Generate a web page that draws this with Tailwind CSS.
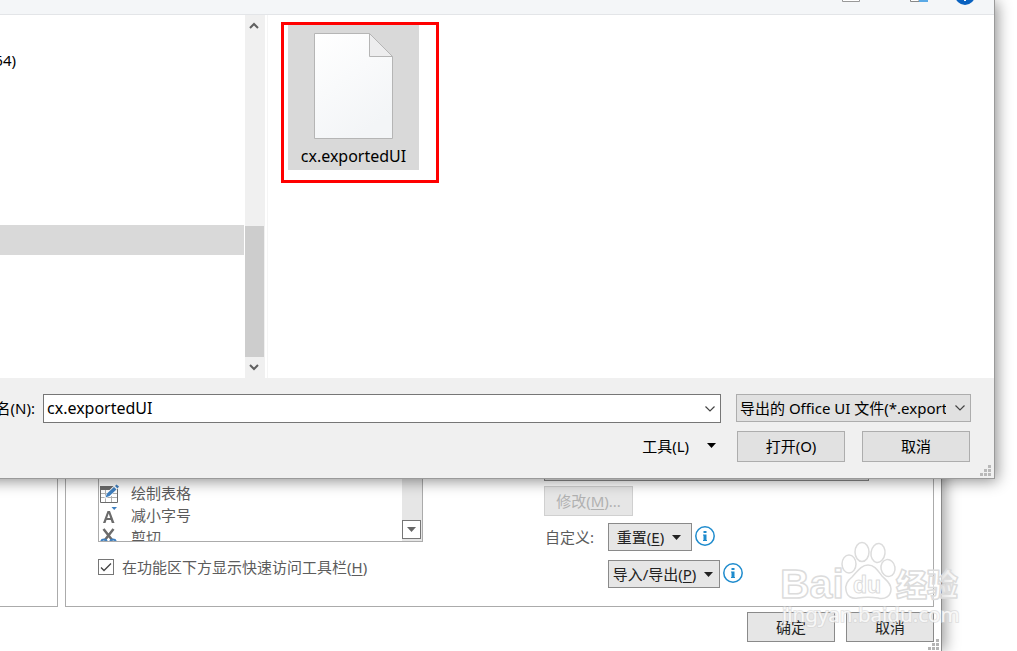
<!DOCTYPE html>
<html lang="zh-CN">
<head>
    <meta charset="UTF-8">
    <meta name="viewport" content="width=device-width, initial-scale=1.0">
    <title>导入自定义文件</title>
    <script src="https://cdn.jsdelivr.net/npm/@tailwindcss/browser@4"></script>
    <style>
        body { font-family: 'Noto Sans', 'Noto Sans CJK SC', sans-serif; }
    </style>
</head>
<body class="bg-white text-[15px] leading-5 text-black">

<div class="relative h-screen overflow-hidden">

    <!-- Options window (behind) -->
    <section class="absolute inset-y-0 left-0 right-[75px] flex flex-col bg-white border-r border-[#8a8a8a] shadow-[3px_0_14px_rgba(0,0,0,0.4)] pt-[440px] text-[#5c5c5c]">
        <div class="flex h-[167px] shrink-0 gap-[7px] pr-[7px]">
            <div class="w-[58px] border-r border-b border-[#ababab]"></div>
            <div class="flex-1 flex border border-[#ababab]">

                <div class="w-[325px] ml-8 shrink-0">
                    <div class="flex h-[101px] border border-t-0 border-[#ababab]">
                        <ul class="flex-1 h-[100px] overflow-hidden pt-[41px]">
                            <li class="flex h-[22px] items-center gap-3">
                                <svg class="w-5 h-5 shrink-0" viewBox="0 0 20 20" fill="none">
                                    <path d="M1.500 3.500H18.500V19.500H1.500Z" fill="#fff" stroke="#6b6b6b"/>
                                    <path d="M1 3H15L12 7H1Z" fill="#6b6b6b"/>
                                    <path d="M6.500 7V19M12.500 13V19M2 10.500H18M2 14.500H18" stroke="#b0b0b0"/>
                                    <path d="M7 14L9 10L17 2L19 4L11 12Z" fill="#fff" stroke="#fff" stroke-width="2"/>
                                    <path d="M6.500 14.500L8 10.500L15 4L17.500 6.500L10.500 13Z" fill="#3f7fbf"/>
                                    <path d="M16 3L17.500 1.500L20 3.500L18.500 5.500Z" fill="#3f7fbf"/>
                                </svg>
                                <span>绘制表格</span>
                            </li>
                            <li class="flex h-[22px] items-center gap-3">
                                <svg class="w-5 h-5 shrink-0" viewBox="0 0 20 20">
                                    <path d="M4 18L8.500 6H11L15.500 18H12.800L11.800 15H7.500L6.500 18ZM8.200 13H11.200L9.700 8.500Z" fill="#6b6b6b"/>
                                    <path d="M12.500 2H18L15.200 5Z" fill="#3f7fbf"/>
                                </svg>
                                <span>减小字号</span>
                            </li>
                            <li class="flex h-[22px] items-center gap-3">
                                <svg class="w-5 h-5 shrink-0" viewBox="0 0 20 20" fill="none">
                                    <path d="M4.500 2L13.500 13.500M14.500 2L5.500 13.500" stroke="#6b6b6b" stroke-width="2.500"/>
                                    <circle cx="5" cy="15.500" r="3" stroke="#3f7fbf" stroke-width="1.800"/>
                                    <circle cx="14" cy="15.500" r="3" stroke="#3f7fbf" stroke-width="1.800"/>
                                </svg>
                                <span>剪切</span>
                            </li>
                        </ul>
                        <div class="w-5 flex flex-col justify-end bg-[#e6e6e6] pb-[2px]">
                            <button aria-label="向下滚动" class="w-[19px] h-[19px] flex items-center justify-center bg-white border border-[#767676]">
                                <svg class="w-[9px] h-[5px]" viewBox="0 0 9 5"><path d="M0 0H9L4.500 5Z" fill="#666"/></svg>
                            </button>
                        </div>
                    </div>
                    <label class="flex items-center gap-2 mt-[15px]">
                        <span class="relative flex">
                            <input type="checkbox" checked class="appearance-none w-4 h-4 bg-white border border-[#767676]">
                            <svg class="absolute inset-0 w-4 h-4 pointer-events-none" viewBox="0 0 16 16" fill="none"><path d="M3 8.500L6 11.500L13 4.500" stroke="#444" stroke-width="1.300"/></svg>
                        </span>
                        <span>在功能区下方显示快速访问工具栏(<u class="underline-offset-2">H</u>)</span>
                    </label>
                </div>

                <div class="w-[325px] ml-[121px]">
                    <div class="h-10 bg-[#e6e6e6] border border-[#8a8a8a]"></div>
                    <button disabled class="mt-[5px] w-[89px] h-[30px] bg-[#e6e6e6] border border-[#d0d0d0] text-[#b1b1b1]">修改(<u class="underline-offset-2">M</u>)...</button>
                    <div class="grid grid-cols-[64px_1fr] items-center gap-y-[9px] mt-[7px]">
                        <span class="pl-px">自定义:</span>
                        <div class="flex items-center gap-[3px]">
                            <button class="w-[84px] h-7 flex items-center justify-center gap-2 bg-[#e6e6e6] border border-[#8a8a8a] pr-[2px] text-[#222]">
                                <span>重置(<u class="underline-offset-2">E</u>)</span>
                                <svg class="w-[9px] h-[5px]" viewBox="0 0 9 5"><path d="M0 0H9L4.500 5Z" fill="#222"/></svg>
                            </button>
                            <svg class="w-5 h-5 mb-[2px]" viewBox="0 0 20 20" fill="none"><circle cx="10" cy="10" r="9.200" stroke="#1e8bcd" stroke-width="1.500"/><path d="M8.500 5H11.500V7H8.500ZM8 8.500H11.500V14H12V15H8V14H8.500V9.500H8Z" fill="#1e8bcd"/></svg>
                        </div>
                        <div class="col-start-2 flex items-center gap-[3px]">
                            <button class="w-28 h-7 flex items-center justify-center gap-2 bg-[#e6e6e6] border border-[#8a8a8a] pr-[2px] text-[#222]">
                                <span>导入/导出(<u class="underline-offset-2">P</u>)</span>
                                <svg class="w-[9px] h-[5px]" viewBox="0 0 9 5"><path d="M0 0H9L4.500 5Z" fill="#222"/></svg>
                            </button>
                            <svg class="w-5 h-5 mb-[2px]" viewBox="0 0 20 20" fill="none"><circle cx="10" cy="10" r="9.200" stroke="#1e8bcd" stroke-width="1.500"/><path d="M8.500 5H11.500V7H8.500ZM8 8.500H11.500V14H12V15H8V14H8.500V9.500H8Z" fill="#1e8bcd"/></svg>
                        </div>
                    </div>
                </div>
            </div>
        </div>
        <div class="flex justify-end gap-[11px] pt-[5px] pr-[7px]">
            <button class="w-[88px] h-[30px] bg-[#e6e6e6] border border-[#8a8a8a] text-[#222]">确定</button>
            <button class="w-[88px] h-[30px] bg-[#e6e6e6] border border-[#8a8a8a] text-[#222]">取消</button>
        </div>
        <svg class="absolute right-[2px] bottom-px w-[11px] h-[11px]" viewBox="0 0 11 11" fill="#b4b4b4"><path d="M8 0h3v3h-3zM8 4h3v3h-3zM4 4h3v3h-3zM8 8h3v3h-3zM4 8h3v3h-3zM0 8h3v3h-3z"/></svg>
    </section>

    <!-- Open file dialog -->
    <section class="absolute top-0 -left-5 right-[22px] flex flex-col bg-[#f0f0f0] border-r border-b border-[#9a9a9a] pl-5 shadow-[2px_2px_14px_rgba(0,0,0,0.45)]">
        <div class="h-[15px] overflow-hidden flex justify-end gap-[41px] pr-[19px] bg-[#f4f6f8] border-b border-[#e3e5e8]">
            <svg class="w-[110px] h-[14px]" viewBox="0 0 110 14" fill="none">
                <path d="M18.500 0V1.500H35.500V0" fill="#fff" stroke="#999"/>
                <path d="M86.500 0V1.500H95V0" fill="#fff" stroke="#888"/>
                <path d="M95 0H104V2H95Z" fill="#5aa9e6"/>
            </svg>
            <svg class="w-5 h-[14px] -ml-[20px]" viewBox="0 0 20 14">
                <circle cx="10" cy="-5" r="10" fill="#0a62c0"/>
                <path d="M9 0H11V1H9Z" fill="#fff"/>
            </svg>
        </div>

        <div class="flex h-[363px] bg-white">
            <nav class="w-[245px] shrink-0 pt-[35px] pr-px overflow-hidden">
                <div class="flex h-5 w-4 justify-end whitespace-nowrap">64)</div>
                <div class="mt-[155px] h-[30px] bg-[#d9d9d9]"></div>
            </nav>
            <div class="w-5 shrink-0 flex flex-col bg-[#f0f0f0]">
                <button aria-label="向上" class="h-[21px] flex items-center justify-center pr-[2px]">
                    <svg class="w-[10px] h-[7px]" viewBox="0 0 10 7" fill="none"><path d="M1 6L5 2L9 6" stroke="#606060" stroke-width="2"/></svg>
                </button>
                <div class="mt-auto mr-px h-[131px] bg-[#cdcdcd]"></div>
                <button aria-label="向下" class="h-[21px] flex items-center justify-center pr-[2px]">
                    <svg class="w-[10px] h-[7px]" viewBox="0 0 10 7" fill="none"><path d="M1 1L5 5L9 1" stroke="#606060" stroke-width="2"/></svg>
                </button>
            </div>
            <div class="ml-[2px] flex-1 border-l border-[#f5f5f5] pt-[7px] pl-[13px]">
                <div class="w-[158px] h-[161px] border-[3px] border-[#f00] pl-1">
                    <div class="w-[131px] h-[145px] flex flex-col items-center gap-[7px] bg-[#d9d9d9] pt-2">
                        <svg class="w-[79px] h-[106px] shrink-0" viewBox="0 0 79 106">
                            <defs>
                                <linearGradient id="page" x1="0" y1="0" x2="0.500" y2="1"><stop offset="0" stop-color="#fff"/><stop offset="1" stop-color="#f3f5f7"/></linearGradient>
                            </defs>
                            <path d="M0.500 0.500H55.500L78.500 23.500V105.500H0.500Z" fill="url(#page)" stroke="#b5b5b5"/>
                            <path d="M55.500 0.500V23.500H78.500Z" fill="#ededee" stroke="#b5b5b5"/>
                        </svg>
                        <span class="text-base leading-5">cx.exportedUI</span>
                    </div>
                </div>
            </div>
        </div>

        <div class="pt-4 pb-4 pr-[23px] flex flex-col gap-2">
            <div class="flex items-start">
                <label for="filename" class="w-[43px] pr-2 shrink-0 flex justify-end overflow-hidden whitespace-nowrap leading-7">文件名(N):</label>
                <div class="flex-1 flex h-[29px] items-center bg-white border border-[#767676] pr-[5px]">
                    <input id="filename" type="text" value="cx.exportedUI" class="flex-1 min-w-0 px-[3px] pb-[2px] text-base leading-5 outline-none">
                    <svg class="w-[10px] h-[6px]" viewBox="0 0 10 6" fill="none"><path d="M0.500 0.500L5 5L9.500 0.500" stroke="#444" stroke-width="1.200"/></svg>
                </div>
                <div class="relative ml-[15px] w-[235px] h-7">
                    <select aria-label="文件类型" class="appearance-none w-full h-7 pl-[3px] pr-6 bg-[#e1e1e1] border border-[#adadad] overflow-hidden whitespace-nowrap">
                        <option>导出的 Office UI 文件(*.exportedUI)</option>
                    </select>
                    <svg class="absolute right-[6px] top-[11px] w-[10px] h-[6px] pointer-events-none" viewBox="0 0 10 6" fill="none"><path d="M0.500 0.500L5 5L9.500 0.500" stroke="#444" stroke-width="1.200"/></svg>
                </div>
            </div>
            <div class="flex items-center justify-end pr-px">
                <button class="flex items-center gap-[18px] mr-[21px] pb-[2px]">
                    <span>工具(L)</span>
                    <svg class="w-[9px] h-[5px]" viewBox="0 0 9 5"><path d="M0 0H9L4.500 5Z"/></svg>
                </button>
                <button class="w-[108px] h-[31px] pb-[2px] bg-[#e1e1e1] border border-[#adadad]">打开(O)</button>
                <button class="ml-[17px] w-[108px] h-[31px] pb-[2px] bg-[#e1e1e1] border border-[#adadad]">取消</button>
            </div>
        </div>
        <svg class="absolute right-[3px] bottom-[2px] w-[11px] h-[11px]" viewBox="0 0 11 11" fill="#b9b9b9"><path d="M8 0h3v3h-3zM8 4h3v3h-3zM4 4h3v3h-3zM8 8h3v3h-3zM4 8h3v3h-3zM0 8h3v3h-3z"/></svg>
    </section>

    <!-- Watermark -->
    <svg class="absolute right-[47px] bottom-[11px] w-[200px] h-[100px] pointer-events-none" viewBox="0 0 200 100" fill="#fff" fill-opacity="0.6" stroke="#dcdcdc" stroke-width="1.500" stroke-linejoin="round">
        <text x="10" y="58" font-size="41" class="font-bold font-['Liberation_Sans']">Bai</text>
        <ellipse cx="79" cy="24" rx="7" ry="9"/>
        <ellipse cx="92" cy="12" rx="7" ry="9.500"/>
        <ellipse cx="108" cy="13" rx="7" ry="9.500" transform="rotate(8 108 13)"/>
        <ellipse cx="118" cy="28" rx="7" ry="8.500" transform="rotate(-10 118 28)"/>
        <path d="M98 25C91 25 87 32 82 37C77 41 75 45 76 50C77 57 82 59 88 58C95 57 101 57 108 58C115 60 121 56 121 49C121 43 116 40 112 36C108 31 105 25 98 25Z"/>
        <text x="83" y="53" font-size="23" stroke-width="1" class="font-bold font-['Liberation_Sans']">du</text>
        <text x="126" y="56" font-size="31" class="font-black font-['Noto_Sans_CJK_SC']">经验</text>
        <text x="12" y="82" font-size="20.500" stroke="#d4d4d4" stroke-opacity="0.6" stroke-width="2" paint-order="stroke" fill-opacity="0.8" class="font-['Noto_Sans']">jingyan.baidu.com</text>
    </svg>
</div>

</body>
</html>
